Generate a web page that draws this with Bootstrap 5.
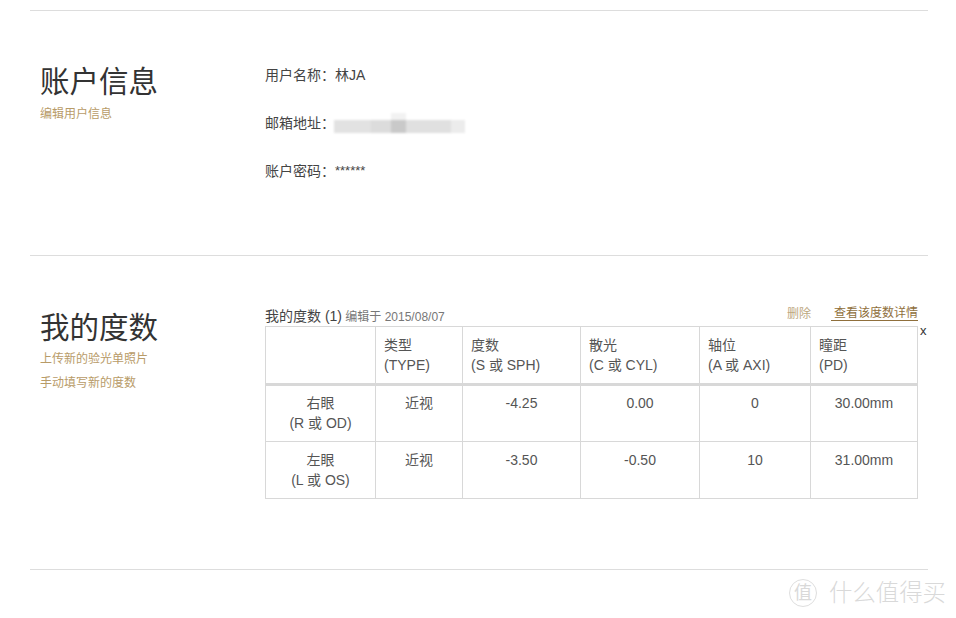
<!DOCTYPE html>
<html lang="zh-CN">
<head>
    <meta charset="UTF-8">
    <title>账户信息</title>
    <link href="https://cdn.jsdelivr.net/npm/bootstrap@5.3.3/dist/css/bootstrap.min.css" rel="stylesheet">
    <style>
        html, body { height: 100%; }
        body { background: #fff; color: #444; font-family: "Liberation Sans", "Noto Sans CJK SC", sans-serif; font-size: 14px; line-height: 20px; overflow: hidden; position: relative; }
        .page-wrap { width: 898px; margin-left: 30px; padding-top: 10px; }
        .acct-section { border-top: 1px solid #ddd; }
        .section-one { height: 245px; padding-top: 53px; }
        .section-two { height: 314px; padding-top: 54px; }
        .section-end { border-top: 1px solid #ddd; }
        .side-col { width: 235px; padding-left: 10px; flex-shrink: 0; }
        .side-title { font-size: 29.5px; line-height: 36px; font-weight: 400; color: #333; margin: 0 0 2px; }
        .section-two .side-title { margin-bottom: 1px; }
        .side-link { display: block; font-size: 12px; line-height: 24px; color: #b89b68; }
        .info-row { font-size: 14px; line-height: 20px; color: #444; margin-bottom: 28px; display: flex; align-items: center; }
        .info-col { padding-top: 1px; }
        .stars { font-size: 13px; }
        .blur-email { display: flex; align-items: flex-end; width: 131px; height: 14px; margin-left: -1px; margin-top: 5px; filter: blur(1px); }
        .blur-email span { height: 13px; }
        .b1 { background: #e2e2e2; width: 37px; }
        .b2 { background: #dcdcdc; width: 20px; }
        .b3 { background: #c9c9c9; width: 15px; box-shadow: 0 -7px 0 #f2f2f2; }
        .b4 { background: #e0e0e0; width: 45px; }
        .b5 { background: #ececec; width: 14px; }
        .detail-col { width: 653px; margin-top: -3px; }
        .detail-head { height: 19px; display: flex; justify-content: space-between; font-size: 12px; line-height: 18px; }
        .detail-count { font-size: 14px; color: #444; }
        .detail-date { color: #777; }
        .head-links { display: flex; align-items: flex-start; line-height: 14px; }
        .del-link { color: #bda780; margin-right: 20px; }
        .view-link { color: #8f6f3c; border-bottom: 1px solid #8f6f3c; padding-left: 3px; line-height: 13px; height: 14px; display: block; }
        .degree-table { table-layout: fixed; width: 652px; border-collapse: collapse; margin: 0; font-size: 14px; line-height: 19.5px; color: #555; }
        .degree-table th, .degree-table td { border: 1px solid #d8d8d8; font-weight: 400; padding: 8px 8px 4px; vertical-align: top; }
        .degree-table thead th { height: 58px; padding-top: 9px; border-bottom: 3px solid #d8d8d8; }
        .degree-table tbody td { height: 57px; text-align: center; }
        .degree-table tbody tr:last-child td { padding-top: 9px; }
        .close-x { position: absolute; left: 920px; top: 322px; font-size: 13px; line-height: 18px; color: #333; }
        .mark-logo { position: absolute; left: 789px; top: 579px; display: flex; align-items: center; gap: 12px; color: #d9d9d9; }
        .mark-circle { width: 28px; height: 28px; border: 1px solid #dedede; border-radius: 50%; font-size: 18px; line-height: 26px; text-align: center; }
        .mark-text { font-size: 23.4px; line-height: 28px; font-weight: 300; white-space: nowrap; }
    </style>
</head>
<body>
<div class="page-wrap">
    <!-- account -->
    <div class="acct-section section-one d-flex">
        <div class="side-col">
            <h2 class="side-title">账户信息</h2>
            <a class="side-link text-decoration-none" href="#">编辑用户信息</a>
        </div>
        <div class="info-col">
            <div class="info-row">用户名称：林JA</div>
            <div class="info-row">邮箱地址：<div class="blur-email"><span class="b1"></span><span class="b2"></span><span class="b3"></span><span class="b4"></span><span class="b5"></span></div></div>
            <div class="info-row">账户密码：<span class="stars">******</span></div>
        </div>
    </div>
    <!-- prescription -->
    <div class="acct-section section-two d-flex">
        <div class="side-col">
            <h2 class="side-title">我的度数</h2>
            <a class="side-link text-decoration-none" href="#">上传新的验光单照片</a>
            <a class="side-link text-decoration-none" href="#">手动填写新的度数</a>
        </div>
        <div class="detail-col">
            <div class="detail-head">
                <div><span class="detail-count">我的度数 (1)</span> <span class="detail-date">编辑于 2015/08/07</span></div>
                <div class="head-links"><a class="del-link text-decoration-none" href="#">删除</a><a class="view-link text-decoration-none" href="#">查看该度数详情</a></div>
            </div>
            <table class="degree-table">
                <colgroup><col style="width:110px"><col style="width:87px"><col style="width:118px"><col style="width:119px"><col style="width:111px"><col style="width:107px"></colgroup>
                <thead>
                    <tr><th></th><th>类型<br>(TYPE)</th><th>度数<br>(S 或 SPH)</th><th>散光<br>(C 或 CYL)</th><th>轴位<br>(A 或 AXI)</th><th>瞳距<br>(PD)</th></tr>
                </thead>
                <tbody>
                    <tr><td>右眼<br>(R 或 OD)</td><td>近视</td><td>-4.25</td><td>0.00</td><td>0</td><td>30.00mm</td></tr>
                    <tr><td>左眼<br>(L 或 OS)</td><td>近视</td><td>-3.50</td><td>-0.50</td><td>10</td><td>31.00mm</td></tr>
                </tbody>
            </table>
        </div>
    </div>
    <div class="section-end"></div>
</div>
<span class="close-x">x</span>
<div class="mark-logo"><div class="mark-circle">值</div><div class="mark-text">什么值得买</div></div>
<script src="https://cdn.jsdelivr.net/npm/bootstrap@5.3.3/dist/js/bootstrap.bundle.min.js"></script>
</body>
</html>
